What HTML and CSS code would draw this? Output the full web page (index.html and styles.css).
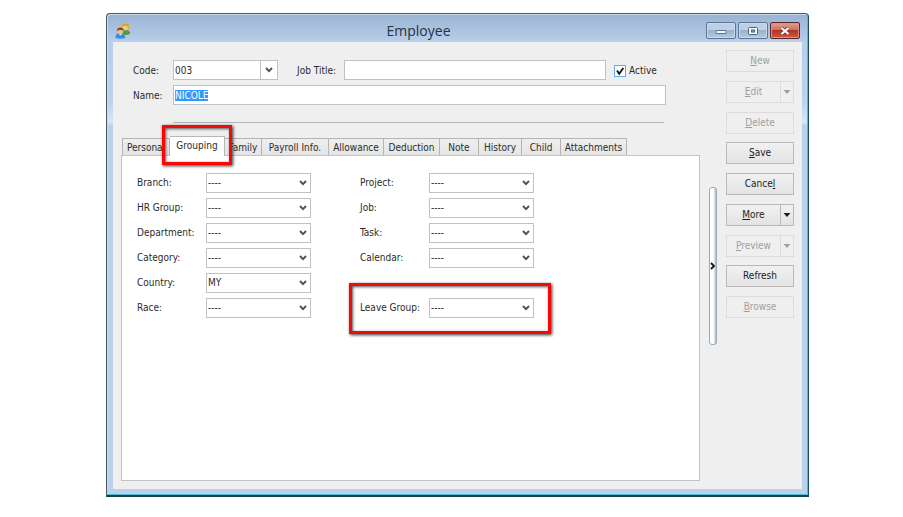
FILE: index.html
```html
<!DOCTYPE html>
<html lang="en">
<head>
<meta charset="utf-8">
<title>Employee</title>
<link rel="stylesheet" href="styles.css">
</head>
<body>
<svg class="defs" aria-hidden="true">
  <symbol id="chevron" viewBox="0 0 8 6"><path d="M1 1l3 3.200L7 1" fill="none" stroke="currentColor" stroke-width="1.900"/></symbol>
  <symbol id="caret" viewBox="0 0 8 4"><path d="M0.500 0h7L4 4z" fill="currentColor"/></symbol>
</svg>
<main class="window">
  <header class="titlebar">
    <svg class="app-icon" viewBox="0 0 16 16" aria-hidden="true">
      <path d="M8 11.500q-.5-4.500 3-4.500 4 0 4.200 3.500-1.500 1.500-4.700 1.500z" fill="#4f9e3c"/>
      <circle cx="10.500" cy="4.200" r="3" fill="#f3c98d"/>
      <path d="M7.200 5V1.200Q10.500-.4 13.800 1.200V6L12.600 6.600V3H8.500z" fill="#e0a51c"/>
      <path d="M.5 15q-.3-5 4.800-5t5 5q-4.800 1.400-9.800 0z" fill="#3d8ee0"/>
      <path d="M3.500 10.500l2 2 2-2z" fill="#e8f3ff"/>
      <circle cx="5.300" cy="8" r="2.900" fill="#f0bd88"/>
      <path d="M2 8.500Q1.600 4.500 5.300 4.500T8.800 8.500L7.400 7H3.600z" fill="#8b4a1f"/>
    </svg>
    <h1 class="title">Employee</h1>
    <div class="captions">
      <button class="caption" aria-label="Minimize"><svg viewBox="0 0 12 8"><rect x="1" y="3.500" width="10" height="3" rx="1" fill="#f7f9fb" stroke="#626d7c"/></svg></button>
      <button class="caption" aria-label="Maximize"><svg viewBox="0 0 12 8"><rect x="1.500" y=".5" width="9" height="7" rx="1" fill="#f7f9fb" stroke="#566170"/><rect x="4.500" y="3" width="3" height="2" fill="#8ba4c2" stroke="#566170"/></svg></button>
      <button class="caption close" aria-label="Close"><svg viewBox="0 0 12 8"><path d="M2.500 1l7 6M9.500 1l-7 6" stroke="#6b3434" stroke-width="3.600"/><path d="M2.500 1l7 6M9.500 1l-7 6" stroke="#fff" stroke-width="2.200"/></svg></button>
    </div>
  </header>
  <div class="client">
    <section class="content">
      <form class="summary">
        <div class="line">
          <label class="caption-text" for="code">Code:</label>
          <div class="combo code">
            <input id="code" class="field" value="003">
            <button type="button" class="drop" aria-label="Choose code"><svg class="chev"><use href="#chevron"/></svg></button>
          </div>
          <label class="job-label" for="job-title">Job Title:</label>
          <input id="job-title" class="field job-title">
          <label class="check"><input type="checkbox" checked><svg class="tick" viewBox="0 0 12 12"><path d="M3 5.500l2.200 3.300L9.300 3" fill="none" stroke="#171717" stroke-width="1.900"/></svg><span>Active</span></label>
        </div>
        <div class="line">
          <label class="caption-text" for="name">Name:</label>
          <div class="name-box">
            <input id="name" class="field name" value="NICOLE">
          </div>
        </div>
        <hr class="rule">
      </form>
      <nav class="tabs" role="tablist">
        <button class="tab first" role="tab">Personal</button>
        <button class="tab active" role="tab" aria-selected="true">Grouping</button>
        <button class="tab" role="tab">Family</button>
        <button class="tab" role="tab">Payroll Info.</button>
        <button class="tab" role="tab">Allowance</button>
        <button class="tab" role="tab">Deduction</button>
        <button class="tab" role="tab">Note</button>
        <button class="tab" role="tab">History</button>
        <button class="tab" role="tab">Child</button>
        <button class="tab" role="tab">Attachments</button>
        <span class="mark mark-tab"></span>
      </nav>
      <div class="panel" role="tabpanel">
        <div class="groups">
          <div class="group">
            <label for="branch">Branch:</label><div class="pick"><select id="branch"><option>----</option></select><svg class="chev"><use href="#chevron"/></svg></div>
            <label for="hr">HR Group:</label><div class="pick"><select id="hr"><option>----</option></select><svg class="chev"><use href="#chevron"/></svg></div>
            <label for="department">Department:</label><div class="pick"><select id="department"><option>----</option></select><svg class="chev"><use href="#chevron"/></svg></div>
            <label for="category">Category:</label><div class="pick"><select id="category"><option>----</option></select><svg class="chev"><use href="#chevron"/></svg></div>
            <label for="country">Country:</label><div class="pick"><select id="country"><option>MY</option></select><svg class="chev"><use href="#chevron"/></svg></div>
            <label for="race">Race:</label><div class="pick"><select id="race"><option>----</option></select><svg class="chev"><use href="#chevron"/></svg></div>
          </div>
          <div class="group">
            <label for="project">Project:</label><div class="pick"><select id="project"><option>----</option></select><svg class="chev"><use href="#chevron"/></svg></div>
            <label for="job">Job:</label><div class="pick"><select id="job"><option>----</option></select><svg class="chev"><use href="#chevron"/></svg></div>
            <label for="task">Task:</label><div class="pick"><select id="task"><option>----</option></select><svg class="chev"><use href="#chevron"/></svg></div>
            <label for="calendar">Calendar:</label><div class="pick"><select id="calendar"><option>----</option></select><svg class="chev"><use href="#chevron"/></svg></div>
            <label class="last-row" for="leave">Leave Group:</label><div class="pick last-row"><select id="leave"><option>----</option></select><svg class="chev"><use href="#chevron"/></svg></div>
            <span class="mark mark-leave"></span>
          </div>
        </div>
      </div>
    </section>
    <button class="splitter" aria-label="Collapse side bar"><svg viewBox="0 0 6 8"><path d="M1 1l3 3-3 3" fill="none" stroke="#111" stroke-width="1.800"/></svg></button>
    <aside class="actions">
      <button class="action" disabled><u>N</u>ew</button>
      <div class="split"><button class="action" disabled><u>E</u>dit</button><button class="action arrow" disabled aria-label="Edit options"><svg class="caret"><use href="#caret"/></svg></button></div>
      <button class="action" disabled><u>D</u>elete</button>
      <button class="action"><u>S</u>ave</button>
      <button class="action">Cance<u>l</u></button>
      <div class="split"><button class="action"><u>M</u>ore</button><button class="action arrow" aria-label="More options"><svg class="caret"><use href="#caret"/></svg></button></div>
      <div class="split"><button class="action" disabled><u>P</u>review</button><button class="action arrow" disabled aria-label="Preview options"><svg class="caret"><use href="#caret"/></svg></button></div>
      <button class="action">Refresh</button>
      <button class="action" disabled><u>B</u>rowse</button>
    </aside>
  </div>
</main>
<script src="script.js"></script>
</body>
</html>
```
FILE: styles.css
```css
* { box-sizing: border-box; }

body {
  margin: 0;
  min-height: 100vh;
  padding: 13px 94px 20px 106px;
  display: flex;
  background: #fff;
  color: #2c2c2c;
  font: 10px/14px "DejaVu Sans Condensed", "DejaVu Sans", sans-serif;
}

button, input, select { font: inherit; color: inherit; margin: 0; }
button { padding: 0; }
.defs { position: absolute; width: 0; height: 0; }

.window {
  flex: 1;
  display: flex;
  flex-direction: column;
  padding: 0 6px 6px;
  border: 1px solid #4d5a62;
  border-right-color: #14535e;
  border-bottom: 2px solid #12424c;
  border-radius: 4px 4px 0 0;
  background: linear-gradient(#9ab3d2, #b7cfea 28px, #bcd3ee 90px, #d9e7f7 108px, #b9d1ea 112px);
  box-shadow: inset -1px -1px #55b9d3, inset 1px 1px #c5d9ee;
}

.titlebar { display: flex; align-items: center; height: 28px; padding: 5px 2px 0; }
.app-icon { width: 16px; height: 16px; }
.title { flex: 1; margin: 0; text-align: center; font: 14px/20px "Open Sans", sans-serif; color: #26313e; }
.captions { display: flex; gap: 2px; }
.caption {
  display: grid;
  place-items: center;
  width: 30px;
  height: 17px;
  border: 1px solid #5d7594;
  border-radius: 2px;
  background: linear-gradient(#bdd0e6 50%, #98b2d0 50%, #b2cae4);
  box-shadow: inset 0 0 0 1px #c9d9ea;
}
.caption svg { width: 12px; height: 8px; }
.caption.close {
  border-color: #5b2630;
  background: linear-gradient(#dba196, #cf6b58 50%, #b43320 50%, #cf5d41);
  box-shadow: inset 0 0 0 1px #dc9385;
}

.client {
  flex: 1;
  display: flex;
  gap: 9px;
  padding: 8px;
  background: #efefef;
}
.content { flex: 1; min-width: 0; display: flex; flex-direction: column; }

.summary { display: flex; flex-direction: column; gap: 5px; padding: 10px 34px 14px 12px; }
.line { display: flex; align-items: center; height: 20px; }
.line label { padding-top: 1px; }
.caption-text { width: 40px; flex: none; }
.field {
  min-width: 0;
  height: 20px;
  padding: 0 1px;
  border: 1px solid #c0c1c6;
  border-radius: 0;
  background: #fff;
  outline: 0;
}
.combo { display: flex; }
.code { width: 105px; flex: none; }
.code .field { flex: 1; }
.drop {
  display: grid;
  place-items: center;
  width: 17px;
  border: 1px solid #c0c1c6;
  border-left: 0;
  background: #fff;
}
.chev { width: 8px; height: 6px; color: #505050; }
.job-label { width: 47px; flex: none; margin-left: 19px; }
.job-title { flex: 1; }
.check {
  display: grid;
  grid-template-columns: 12px 1fr;
  column-gap: 3px;
  align-items: center;
  width: 60px;
  flex: none;
  padding-left: 8px;
}
.check input, .tick { grid-area: 1 / 1; width: 12px; height: 12px; }
.check input {
  appearance: none;
  border: 1px solid #65aaf0;
  background: #fff;
}
.tick { z-index: 1; pointer-events: none; }
.name-box { flex: 1; display: flex; }
.name { flex: 1; }
.name::selection { background: #3399ff; color: #fff; }
.rule { width: auto; align-self: stretch; margin: 12px 2px 0 40px; border: 0; border-top: 1px solid #b4b4b4; }

.tabs {
  position: relative;
  display: grid;
  grid-template-columns: 48px 55px 37px 67px 55px 56px 39px 43px 39px 66px;
  align-items: end;
  margin-top: -1px;
  padding-left: 1px;
}
.tab {
  height: 17px;
  padding-top: 1px;
  border: 1px solid #b5b5b5;
  border-width: 1px 1px 0 0;
  background: linear-gradient(#efefef, #e4e4e4);
  white-space: nowrap;
}
.tab.first { border-left-width: 1px; }
.tab.active {
  position: relative;
  height: 20px;
  margin-bottom: -1px;
  padding-bottom: 2px;
  background: #fff;
}
.mark {
  position: absolute;
  z-index: 2;
  border: 3px solid #f40808;
  box-shadow: 1px 1px 3px #333, inset 1px 1px 3px #555;
  pointer-events: none;
}
.mark-tab { left: 41px; top: -11px; width: 70px; height: 40px; }

.panel { flex: 1; padding: 17px 15px; border: 1px solid #c3c3c3; background: #fff; }
.groups { display: flex; gap: 49px; }
.group {
  position: relative;
  display: grid;
  grid-template-columns: 69px 105px;
  grid-template-rows: repeat(6, 20px);
  row-gap: 5px;
  align-items: center;
}
.last-row { grid-row: 6; }
.pick { display: grid; align-items: center; }
.pick select, .pick .chev { grid-area: 1 / 1; }
.pick .chev { justify-self: end; margin-right: 4px; pointer-events: none; }
.pick select {
  appearance: none;
  width: 100%;
  height: 20px;
  padding: 0 1px;
  border: 1px solid #c0c1c6;
  border-radius: 0;
  background: #fff;
}
.mark-leave { left: -11px; bottom: -16px; width: 202px; height: 51px; }

.splitter {
  align-self: center;
  display: grid;
  place-items: center;
  width: 8px;
  height: 158px;
  border: 1px solid #a4a9ae;
  border-radius: 3px;
  background: linear-gradient(90deg, #fff 55%, #8fc0e4);
}
.splitter svg { width: 6px; height: 8px; }

.actions {
  display: flex;
  flex-direction: column;
  justify-content: space-between;
  width: 68px;
  height: 268px;
}
.action {
  height: 22px;
  border: 1px solid #b9b9b9;
  background: linear-gradient(#f1f1f1, #e3e3e3);
  color: #1c1c1c;
}
.action:disabled { border-color: #dcdcdc; background: #efefef; color: #a0a0a0; }
.split { display: flex; }
.split .action { flex: 1; }
.split .arrow { display: grid; place-items: center; flex: none; width: 13px; border-left: 0; }
.caret { width: 8px; height: 4px; }
```
FILE: script.js
```js
// Start with the employee name selected, ready to be typed over.
const nameField = document.getElementById("name");
nameField.focus();
nameField.select();
```
